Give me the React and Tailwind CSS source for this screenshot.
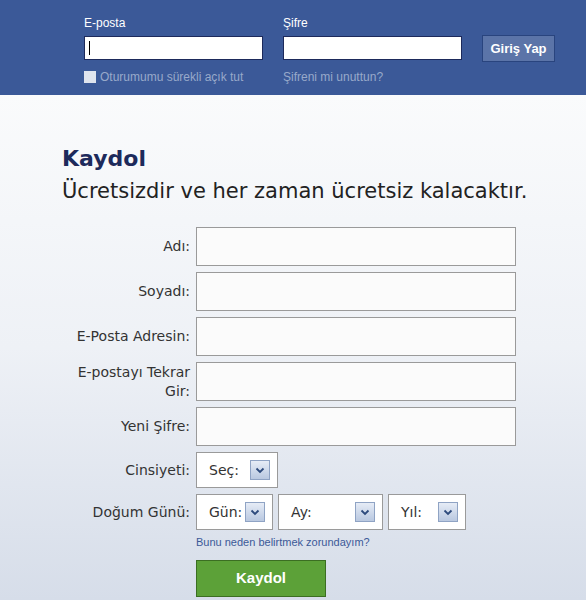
import React from "react";

const font = { fontFamily: '"DejaVu Sans", Tahoma, sans-serif' };
const arial = { fontFamily: '"Liberation Sans", Arial, sans-serif' };

function Arrow() {
  return (
    <span className="flex h-[20px] w-[20px] items-center justify-center border border-[#8fa3c4] bg-gradient-to-b from-[#e6ecf6] to-[#b9c8e0]">
      <svg width="10" height="7" viewBox="0 0 10 7">
        <path d="M1.5 1.5 L5 5 L8.5 1.5" fill="none" stroke="#2d4a7c" strokeWidth="1.8" />
      </svg>
    </span>
  );
}

function Select({ label, width }) {
  return (
    <div
      className={`flex h-[36px] items-center justify-between border border-[#9a9a9a] bg-white pl-3 pr-[7px] text-[14px] text-[#333] ${width}`}
    >
      <span>{label}</span>
      <Arrow />
    </div>
  );
}

function Row({ label, children }) {
  return (
    <div className="flex items-center">
      <div className="w-[156px] pr-[6px] pl-[30px] text-right text-[14px] leading-[19px] text-[#333]">
        {label}
      </div>
      {children}
    </div>
  );
}

export default function App() {
  const fields = ["Adı:", "Soyadı:", "E-Posta Adresin:", "E-postayı Tekrar Gir:", "Yeni Şifre:"];
  return (
    <div className="h-[600px] w-[586px] overflow-hidden bg-white" style={font}>
      <div className="h-[95px] bg-[#3b5998] pt-[14px] pl-[84px]">
        <div className="flex gap-[20px]">
          <div className="flex w-[179px] flex-col">
            <span className="mb-[4px] text-[12px] text-white" style={arial}>
              E-posta
            </span>
            <div className="flex h-[24px] items-center border border-[#1d2a5b] bg-white pl-[4px]">
              <span className="h-[14px] w-px bg-black" />
            </div>
            <label className="mt-[8px] flex items-center gap-[4px] text-[12px] text-[#98a9ca]" style={arial}>
              <span className="h-[12px] w-[12px] bg-[#dfe4ee]" />
              Oturumumu sürekli açık tut
            </label>
          </div>
          <div className="flex w-[179px] flex-col">
            <span className="mb-[4px] text-[12px] text-white" style={arial}>
              Şifre
            </span>
            <div className="h-[24px] border border-[#1d2a5b] bg-white" />
            <span className="mt-[8px] text-[12px] text-[#98a9ca]" style={arial}>
              Şifreni mi unuttun?
            </span>
          </div>
          <div className="pt-[21px]">
            <button
              className="h-[27px] w-[73px] border border-[#29447e] bg-[#5b74a8] text-[13px] font-bold text-white"
              style={arial}
            >
              Giriş Yap
            </button>
          </div>
        </div>
      </div>
      <div className="h-[505px] bg-gradient-to-b from-[#fafbfc] via-[#eef1f6] to-[#d6dde9] pt-[50px]">
        <h1 className="pl-[62px] text-[22px] leading-[28px] font-bold text-[#1d2a5b]">Kaydol</h1>
        <p className="mt-[4px] pl-[62px] text-[21px] leading-[28px] text-[#222]">
          Ücretsizdir ve her zaman ücretsiz kalacaktır.
        </p>
        <div className="mt-[22px] flex flex-col gap-[6px] pl-[40px]">
          {fields.map((f) => (
            <Row key={f} label={f}>
              <div className="h-[39px] w-[320px] border border-[#9a9a9a] bg-[#fbfbfb]" />
            </Row>
          ))}
          <Row label="Cinsiyeti:">
            <Select label="Seç:" width="w-[82px]" />
          </Row>
        </div>
        <div className="mt-[6px] pl-[40px]">
          <Row label="Doğum Günü:">
            <div className="flex gap-[5px]">
              <Select label="Gün:" width="w-[77px]" />
              <Select label="Ay:" width="w-[105px]" />
              <Select label="Yıl:" width="w-[78px]" />
            </div>
          </Row>
          <div className="mt-[4px] pl-[156px] text-[11px] text-[#3b5998]" style={arial}>
            Bunu neden belirtmek zorundayım?
          </div>
          <div className="mt-[9px] pl-[156px]">
            <button
              className="h-[37px] w-[130px] border border-[#3b6e22] bg-[#5ca138] text-[15px] font-bold text-white"
              style={arial}
            >
              Kaydol
            </button>
          </div>
        </div>
      </div>
    </div>
  );
}
